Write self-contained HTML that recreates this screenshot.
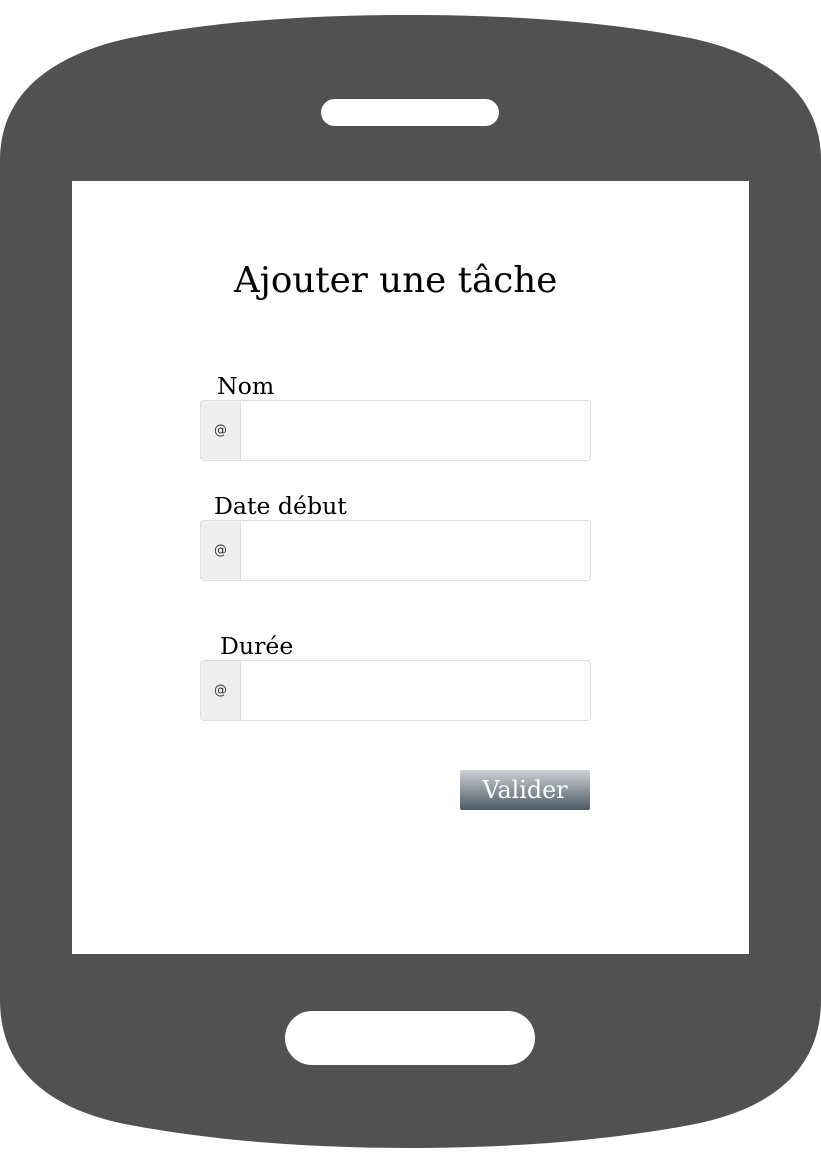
<!DOCTYPE html>
<html><head><style>
body{margin:0;width:821px;height:1161px;background:#fff;position:relative;overflow:hidden;font-family:"DejaVu Serif","Liberation Serif",serif}
svg{position:absolute;left:0;top:0}
.t{position:absolute;white-space:nowrap;color:#000}
.inp{position:absolute;left:200px;width:389px;height:59px;border:1px solid #ddd;border-radius:4px;background:#fff;overflow:hidden}
.inp .a{position:absolute;left:0;top:0;width:39px;height:59px;background:#eee;border-right:1px solid #ddd;font-family:"DejaVu Sans",sans-serif;font-size:13px;line-height:59px;text-align:center;color:#333}
.btn{position:absolute;left:460px;top:770px;width:130px;height:40px;border-radius:2px;background:linear-gradient(#cdd0d3,#4b5a66);color:#fff;font-size:23.8px;line-height:40px;text-align:center}
</style></head><body>
<svg width="821" height="1161">
<path fill="#515151" d="M0,160 C0,95 50,55 130,38 C220,20 320,15 410,15 C500,15 600,20 690,38 C771,55 821,95 821,160 L821,1000 C821,1070 771,1110 690,1125 C600,1142 500,1148 410,1148 C320,1148 220,1142 130,1125 C50,1110 0,1070 0,1000 Z"/>
<rect x="72" y="181" width="677" height="773" fill="#fff"/>
<rect x="321" y="99" width="178" height="27" rx="13.5" fill="#fff"/>
<rect x="285" y="1011" width="250" height="54" rx="27" fill="#fff"/>
</svg>
<div class="t" style="left:234px;top:260px;font-size:35.7px">Ajouter une tâche</div>
<div class="t" style="left:217px;top:372px;font-size:23.6px">Nom</div>
<div class="inp" style="top:400px"><div class="a">@</div></div>
<div class="t" style="left:214px;top:492px;font-size:23.6px">Date début</div>
<div class="inp" style="top:520px"><div class="a">@</div></div>
<div class="t" style="left:220px;top:632px;font-size:23.6px">Durée</div>
<div class="inp" style="top:660px"><div class="a">@</div></div>
<div class="btn">Valider</div>
</body></html>
